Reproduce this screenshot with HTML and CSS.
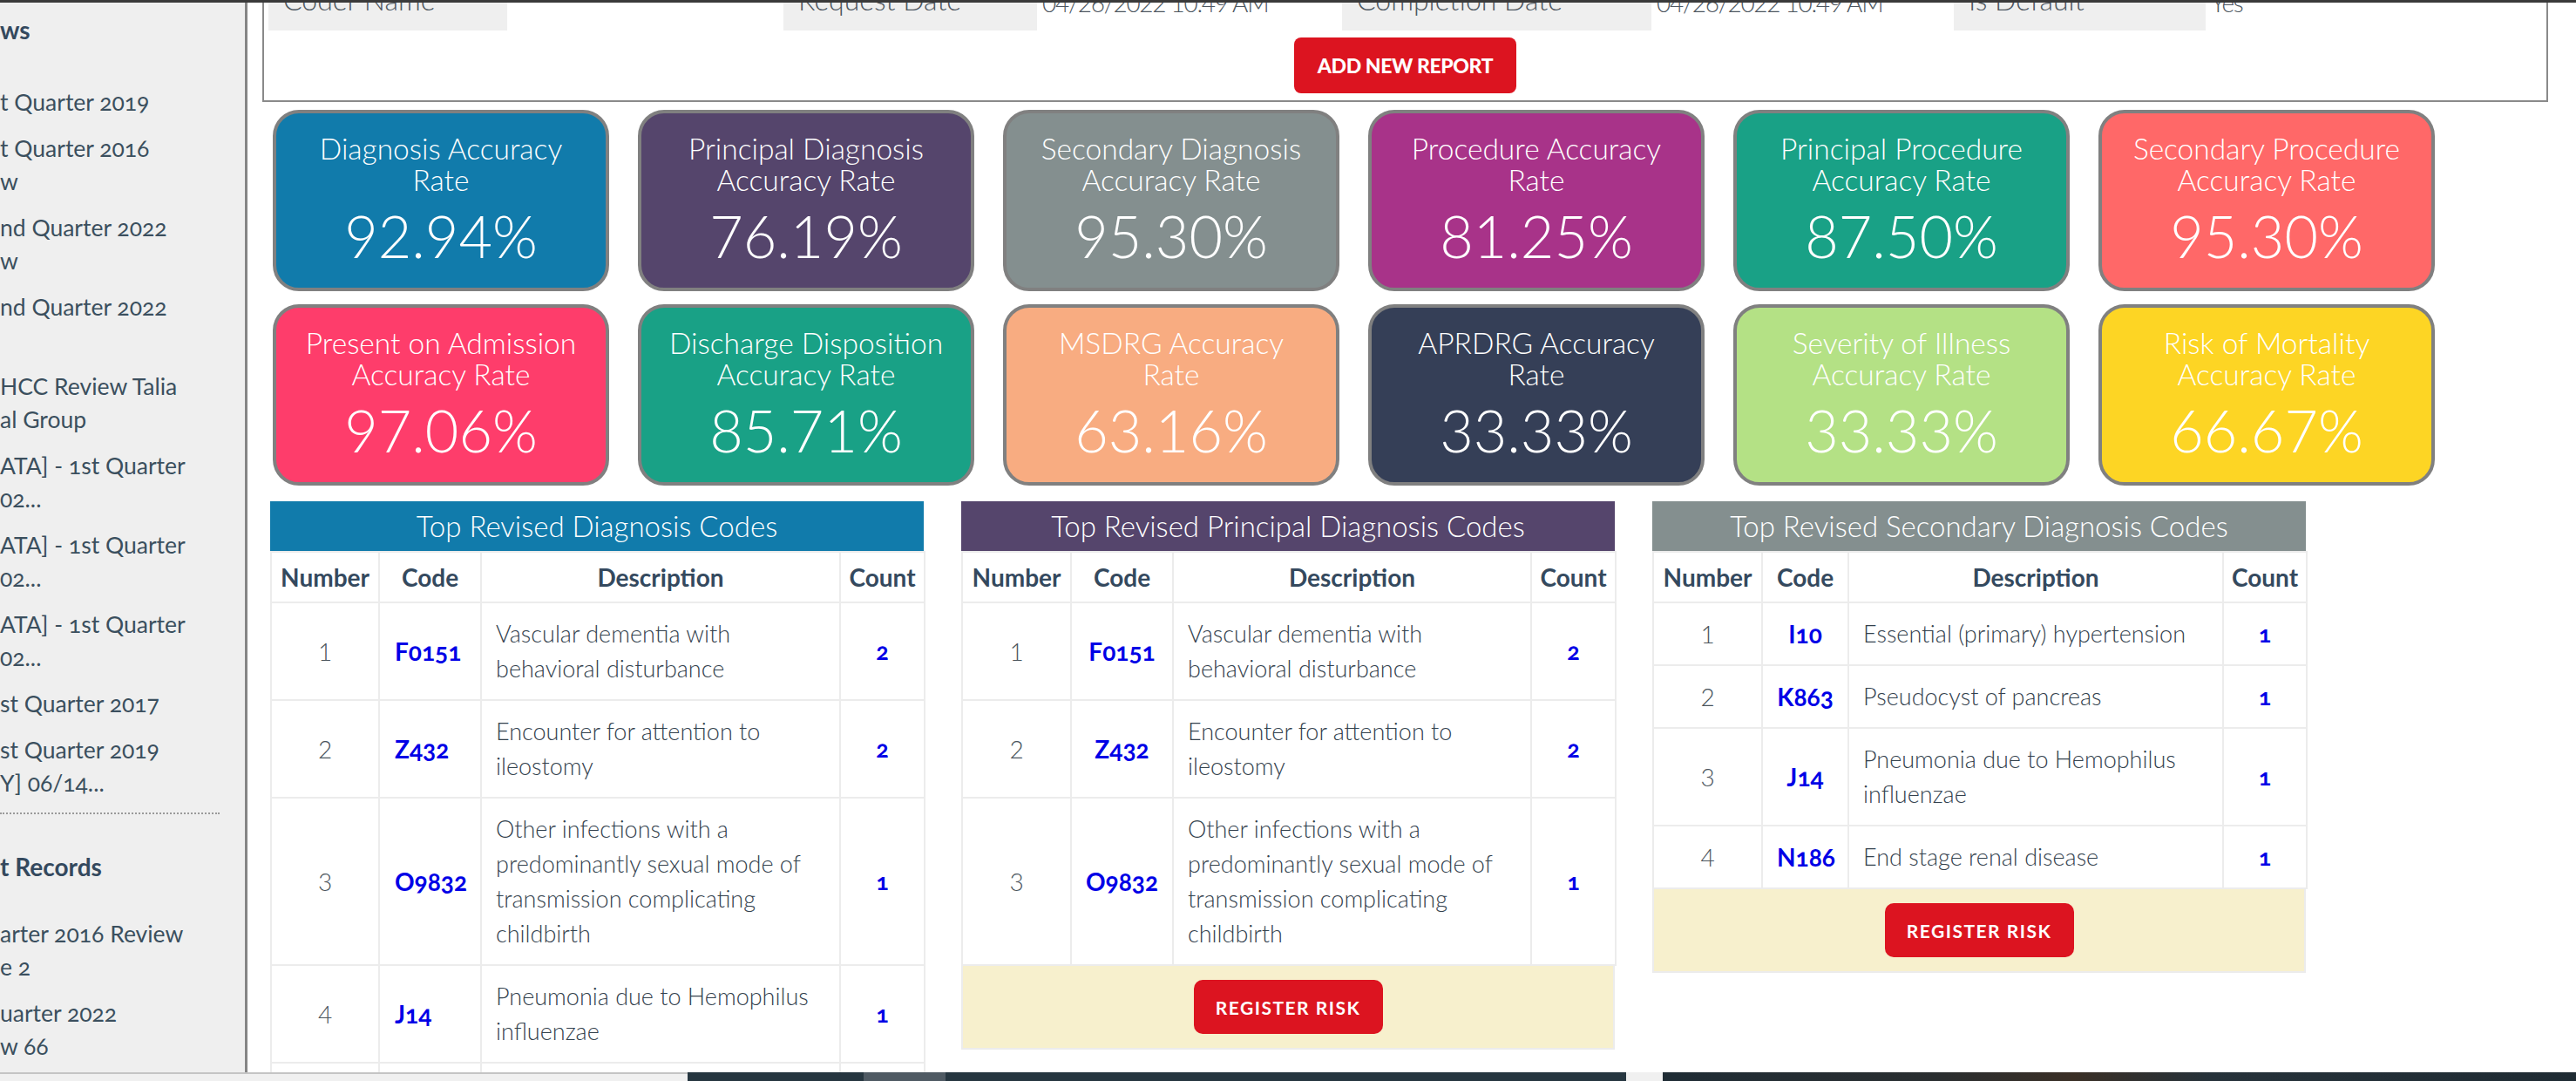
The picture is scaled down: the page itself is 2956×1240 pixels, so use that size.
FILE: index.html
```html
<!DOCTYPE html>
<html lang="en">
<head>
<meta charset="utf-8">
<title>Coding Accuracy Report</title>
<link rel="stylesheet" href="styles.css">
</head>
<body>
<div class="topbar"></div>
<div class="app">
  <aside class="sidebar">
    <div class="side-heading first">ws</div>
    <div class="side-list">
      <div class="side-item">t Quarter 2019</div>
      <div class="side-item">t Quarter 2016<br>w</div>
      <div class="side-item">nd Quarter 2022<br>w</div>
      <div class="side-item">nd Quarter 2022<br>&nbsp;</div>
      <div class="side-item">HCC Review Talia<br>al Group</div>
      <div class="side-item">ATA] - 1st Quarter<br>02...</div>
      <div class="side-item">ATA] - 1st Quarter<br>02...</div>
      <div class="side-item">ATA] - 1st Quarter<br>02...</div>
      <div class="side-item">st Quarter 2017</div>
      <div class="side-item">st Quarter 2019<br>Y] 06/14...</div>
    </div>
    <div class="side-sep"></div>
    <div class="side-heading second">t Records</div>
    <div class="side-list second">
      <div class="side-item">arter 2016 Review<br>e 2</div>
      <div class="side-item">uarter 2022<br>w 66</div>
    </div>
  </aside>

  <main class="main">
    <section class="panel">
      <div class="info-row">
        <div class="lbl">Coder Name</div>
        <div class="val"></div>
        <div class="lbl">Request Date</div>
        <div class="val">04/26/2022 10:49 AM</div>
        <div class="lbl">Completion Date</div>
        <div class="val">04/26/2022 10:49 AM</div>
        <div class="lbl">Is Default</div>
        <div class="val">Yes</div>
      </div>
      <button class="btn btn-add">ADD NEW REPORT</button>
    </section>

    <div class="cards">
      <div class="card c-blue"><div class="card-title"><span>Diagnosis Accuracy</span><span>Rate</span></div><div class="card-num">92.94%</div></div>
      <div class="card c-purple"><div class="card-title"><span>Principal Diagnosis</span><span>Accuracy Rate</span></div><div class="card-num">76.19%</div></div>
      <div class="card c-gray"><div class="card-title"><span>Secondary Diagnosis</span><span>Accuracy Rate</span></div><div class="card-num">95.30%</div></div>
      <div class="card c-magenta"><div class="card-title"><span>Procedure Accuracy</span><span>Rate</span></div><div class="card-num">81.25%</div></div>
      <div class="card c-teal"><div class="card-title"><span>Principal Procedure</span><span>Accuracy Rate</span></div><div class="card-num">87.50%</div></div>
      <div class="card c-salmon"><div class="card-title"><span>Secondary Procedure</span><span>Accuracy Rate</span></div><div class="card-num">95.30%</div></div>
      <div class="card c-pink"><div class="card-title"><span>Present on Admission</span><span>Accuracy Rate</span></div><div class="card-num">97.06%</div></div>
      <div class="card c-teal"><div class="card-title"><span>Discharge Disposition</span><span>Accuracy Rate</span></div><div class="card-num">85.71%</div></div>
      <div class="card c-peach"><div class="card-title"><span>MSDRG Accuracy</span><span>Rate</span></div><div class="card-num">63.16%</div></div>
      <div class="card c-navy"><div class="card-title"><span>APRDRG Accuracy</span><span>Rate</span></div><div class="card-num">33.33%</div></div>
      <div class="card c-lime"><div class="card-title"><span>Severity of Illness</span><span>Accuracy Rate</span></div><div class="card-num">33.33%</div></div>
      <div class="card c-yellow"><div class="card-title"><span>Risk of Mortality</span><span>Accuracy Rate</span></div><div class="card-num">66.67%</div></div>
    </div>

    <div class="tables">
      <div class="tbl tbl-1">
        <div class="tbl-title t-blue">Top Revised Diagnosis Codes</div>
        <table>
          <colgroup><col class="w-num"><col class="w-code"><col class="w-desc"><col class="w-count"></colgroup>
          <thead><tr><th>Number</th><th>Code</th><th>Description</th><th>Count</th></tr></thead>
          <tbody>
            <tr><td class="num">1</td><td class="code">F0151</td><td class="desc">Vascular dementia with behavioral disturbance</td><td class="count">2</td></tr>
            <tr><td class="num">2</td><td class="code">Z432</td><td class="desc">Encounter for attention to ileostomy</td><td class="count">2</td></tr>
            <tr><td class="num">3</td><td class="code">O9832</td><td class="desc">Other infections with a predominantly sexual mode of transmission complicating childbirth</td><td class="count">1</td></tr>
            <tr><td class="num">4</td><td class="code">J14</td><td class="desc">Pneumonia due to Hemophilus influenzae</td><td class="count">1</td></tr>
            <tr><td class="num">5</td><td class="code">N186</td><td class="desc">End stage renal disease</td><td class="count">1</td></tr>
          </tbody>
        </table>
      </div>

      <div class="tbl tbl-2">
        <div class="tbl-title t-purple">Top Revised Principal Diagnosis Codes</div>
        <table>
          <colgroup><col class="w-num"><col class="w-code"><col class="w-desc"><col class="w-count"></colgroup>
          <thead><tr><th>Number</th><th>Code</th><th>Description</th><th>Count</th></tr></thead>
          <tbody>
            <tr><td class="num">1</td><td class="code">F0151</td><td class="desc">Vascular dementia with behavioral disturbance</td><td class="count">2</td></tr>
            <tr><td class="num">2</td><td class="code">Z432</td><td class="desc">Encounter for attention to ileostomy</td><td class="count">2</td></tr>
            <tr><td class="num">3</td><td class="code">O9832</td><td class="desc">Other infections with a predominantly sexual mode of transmission complicating childbirth</td><td class="count">1</td></tr>
          </tbody>
        </table>
        <div class="tbl-foot"><button class="btn btn-risk">REGISTER RISK</button></div>
      </div>

      <div class="tbl tbl-3">
        <div class="tbl-title t-gray">Top Revised Secondary Diagnosis Codes</div>
        <table>
          <colgroup><col class="w-num"><col class="w-code"><col class="w-desc"><col class="w-count"></colgroup>
          <thead><tr><th>Number</th><th>Code</th><th>Description</th><th>Count</th></tr></thead>
          <tbody>
            <tr><td class="num">1</td><td class="code">I10</td><td class="desc">Essential (primary) hypertension</td><td class="count">1</td></tr>
            <tr><td class="num">2</td><td class="code">K863</td><td class="desc">Pseudocyst of pancreas</td><td class="count">1</td></tr>
            <tr><td class="num">3</td><td class="code">J14</td><td class="desc">Pneumonia due to Hemophilus influenzae</td><td class="count">1</td></tr>
            <tr><td class="num">4</td><td class="code">N186</td><td class="desc">End stage renal disease</td><td class="count">1</td></tr>
          </tbody>
        </table>
        <div class="tbl-foot"><button class="btn btn-risk">REGISTER RISK</button></div>
      </div>
    </div>
  </main>
</div>
<div class="taskbar">
  <div class="tb-light"></div>
  <div class="tb-dark1"><span class="tb-patch"></span></div>
  <div class="tb-gap"></div>
  <div class="tb-dark2"></div>
</div>
</body>
</html>
```

FILE: styles.css
```css
* { box-sizing: border-box; }

html, body {
  margin: 0;
  height: 1240px;
  overflow: hidden;
  background: #ffffff;
}

body {
  width: 2956px;
  font-family: Lato, "Open Sans", "Liberation Sans", sans-serif;
  color: #3d4b57;
}

.topbar {
  height: 3px;
  background: #3a3a3a;
}

.app {
  display: flex;
  height: 1227px;
  overflow: hidden;
}

/* ---------- Sidebar ---------- */
.sidebar {
  width: 284px;
  flex: none;
  background: #efefef;
  border-right: 3px solid #858585;
  overflow: hidden;
  white-space: nowrap;
  color: #3b4f5e;
  font-size: 26.5px;
  font-variant-numeric: oldstyle-nums;
}

.side-heading {
  font-size: 28px;
  font-weight: 700;
  line-height: 40px;
  color: #34495e;
}
.side-heading.first { margin-top: 11px; }
.side-heading.second { margin-top: 40px; }

.side-list { margin-top: 44px; }
.side-list.second { margin-top: 38px; }

.side-item {
  line-height: 38px;
  margin-bottom: 15px;
}

.side-sep {
  width: 252px;
  margin-top: 10px;
  border-top: 2px dotted #9a9a9a;
}

/* ---------- Main ---------- */
.main {
  flex: 1;
  min-width: 0;
  padding: 0 32px 0 17px;
  overflow: hidden;
}

.panel {
  margin-top: -28px;
  border: 2px solid #8a8a8a;
  padding: 5px 5px 8px;
}

.info-row {
  display: grid;
  grid-template-columns: 274px 317px 291px 350px 355px 347px 289px 1fr;
  align-items: stretch;
  height: 53px;
  font-weight: 300;
  color: #4d5660;
  white-space: nowrap;
}
.info-row .lbl {
  background: #efefef;
  padding: 0 0 0 17px;
  font-size: 32px;
  line-height: 36px;
}
.info-row .val {
  padding: 3px 0 0 6px;
  font-size: 28px;
  line-height: 36px;
  letter-spacing: -1.3px;
}

.btn {
  display: block;
  border: none;
  color: #ffffff;
  background: #dc1420;
  font-family: Lato, "Open Sans", sans-serif;
  font-weight: 900;
  cursor: pointer;
}

.btn-add {
  width: 255px;
  height: 64px;
  margin: 8px auto 0;
  border-radius: 8px;
  font-size: 23px;
  letter-spacing: -0.4px;
}

/* ---------- Cards ---------- */
.cards {
  display: grid;
  grid-template-columns: repeat(6, 386px);
  column-gap: 33px;
  row-gap: 15px;
  margin: 9px 0 0 12px;
}

.card {
  height: 208px;
  border: 4px solid #808080;
  border-radius: 30px;
  padding: 22px 6px 0;
  text-align: center;
  color: #ffffff;
  font-weight: 300;
}

.card-title {
  font-size: 33.5px;
  line-height: 36px;
}
.card-title span { display: block; white-space: nowrap; }

.card-num {
  margin-top: 10px;
  font-size: 66.5px;
  line-height: 72px;
}

.c-blue    { background: #117bab; }
.c-purple  { background: #55456c; }
.c-gray    { background: #848f8f; }
.c-magenta { background: #a83389; }
.c-teal    { background: #19a186; }
.c-salmon  { background: #ff6868; }
.c-pink    { background: #fe3d6b; }
.c-peach   { background: #f8ac81; }
.c-navy    { background: #353f57; }
.c-lime    { background: #b4e185; }
.c-yellow  { background: #fdd524; }

/* ---------- Tables ---------- */
.tables {
  display: flex;
  align-items: flex-start;
  gap: 43px;
  margin: 18px 0 0 9px;
}

.tbl { width: 750px; flex: none; }

.tbl-title {
  height: 57px;
  line-height: 57px;
  text-align: center;
  color: #ffffff;
  font-size: 33px;
  font-weight: 300;
  white-space: nowrap;
}
.t-blue   { background: #117bab; }
.t-purple { background: #55456c; }
.t-gray   { background: #848f8f; }

table {
  width: 750px;
  table-layout: fixed;
  border-collapse: collapse;
  background: #ffffff;
}

th, td {
  border: 2px solid #ececec;
  vertical-align: middle;
}

th {
  padding: 8px 4px;
  font-size: 28px;
  font-weight: 700;
  line-height: 40px;
  color: #34495e;
  text-align: center;
  white-space: nowrap;
}

td {
  padding: 15px 16px;
  font-size: 27px;
  line-height: 40px;
}

td.num {
  text-align: center;
  font-weight: 300;
  font-size: 28px;
  color: #4a545c;
}

td.code, td.count {
  font-weight: 700;
  color: #0000e6;
  font-variant-numeric: oldstyle-nums;
  text-align: center;
}
td.code { font-size: 28px; }

td.desc {
  font-weight: 300;
  color: #33414d;
  padding-right: 24px;
}

.tbl-1 td.code { text-align: left; padding-left: 17px; }

.tbl-1 .w-num { width: 124px; }
.tbl-1 .w-code { width: 117px; }
.tbl-1 .w-desc { width: 412px; }
.tbl-1 .w-count { width: 97px; }

.tbl-2 .w-num { width: 125px; }
.tbl-2 .w-code { width: 117px; }
.tbl-2 .w-desc { width: 411px; }
.tbl-2 .w-count { width: 97px; }

.tbl-3 .w-num { width: 125px; }
.tbl-3 .w-code { width: 99px; }
.tbl-3 .w-desc { width: 430px; }
.tbl-3 .w-count { width: 96px; }

.tbl-foot {
  background: #f7f0cd;
  border: 2px solid #ececec;
  border-top: none;
  padding: 16px 0;
}

.btn-risk {
  width: 217px;
  height: 62px;
  margin: 0 auto;
  border-radius: 10px;
  font-size: 21px;
  font-weight: 700;
  letter-spacing: 1.5px;
}

/* ---------- Bottom strip ---------- */
.taskbar {
  display: flex;
  height: 10px;
}
.tb-light {
  width: 789px;
  background: #f0f0f0;
  border-top: 2px solid #c4c4c4;
}
.tb-dark1 {
  width: 1077px;
  background: #263640;
  padding-left: 202px;
}
.tb-patch {
  display: block;
  width: 94px;
  height: 10px;
  background: #4f5a63;
}
.tb-gap {
  width: 42px;
  background: #f0f0f0;
}
.tb-dark2 {
  flex: 1;
  background: linear-gradient(90deg, #1f2c35 0%, #2a2e30 30%, #3a2f26 45%, #26323a 60%, #1f2b33 100%);
}
```
